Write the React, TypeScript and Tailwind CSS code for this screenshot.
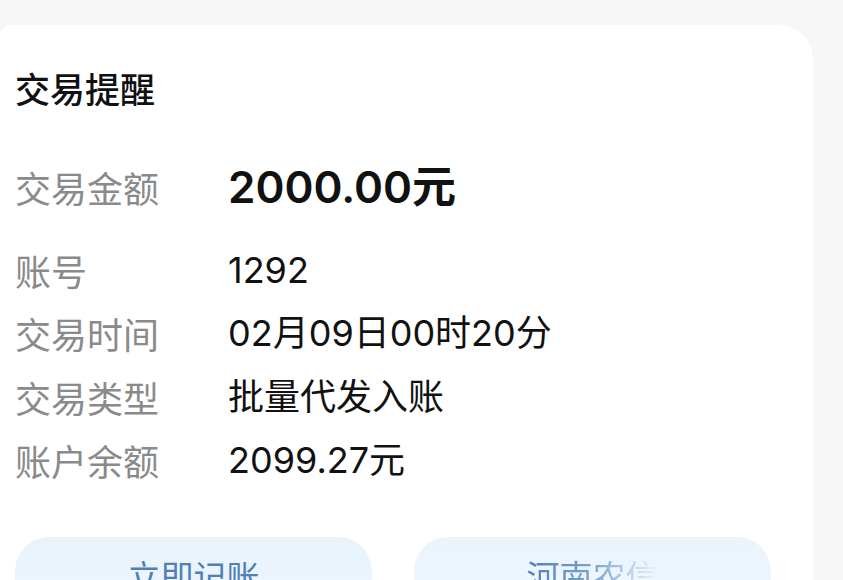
export default function App() {
  const rows: [string, string][] = [
    ["账号", "1292"],
    ["交易时间", "02月09日00时20分"],
    ["交易类型", "批量代发入账"],
    ["账户余额", "2099.27元"],
  ];
  const valFont = { fontFamily: 'Inter, "Noto Sans CJK SC", sans-serif' };
  return (
    <div
      className="w-[843px] h-[580px] overflow-hidden bg-[#f7f7f7] pt-[25px]"
      style={{ fontFamily: '"Noto Sans CJK SC", "Noto Sans", sans-serif' }}
    >
      <div className="w-[813px] h-[600px] bg-white rounded-tr-[34px] rounded-tl-[10px] pl-[15px] pt-[41px]">
        <div className="h-[44px] leading-[44px] text-[35px] font-medium text-[#111]">交易提醒</div>
        <div className="mt-[47px] flex items-center h-[60px]">
          <div className="w-[213px] text-[36px] text-[#8a8a8a]">交易金额</div>
          <div className="text-[44px] font-semibold text-[#111] leading-[60px]" style={valFont}>2000.00元</div>
        </div>
        <div className="mt-[21px] flex flex-col">
          {rows.map(([k, v]) => (
            <div key={k} className="flex items-center h-[63.5px]">
              <div className="w-[213px] text-[36px] text-[#8a8a8a]">{k}</div>
              <div className="text-[36px] text-[#111]" style={valFont}>{v}</div>
            </div>
          ))}
        </div>
        <div className="mt-[45px] flex gap-[42px]">
          <div className="w-[357px] h-[80px] rounded-[34px] bg-gradient-to-b from-[#e9f3fc] to-[#eef6fd] flex justify-center pt-[14px]">
            <span className="text-[33px] text-[#4f7fb6]">立即记账</span>
          </div>
          <div className="w-[357px] h-[80px] rounded-[34px] bg-gradient-to-b from-[#eaf4fd] to-[#f0f7fe] flex justify-center pt-[14px]">
            <span className="text-[33px] bg-gradient-to-r from-[#4f7fb6] via-[#7ea3cc] to-transparent bg-clip-text text-transparent">河南农信</span>
          </div>
        </div>
      </div>
    </div>
  );
}
